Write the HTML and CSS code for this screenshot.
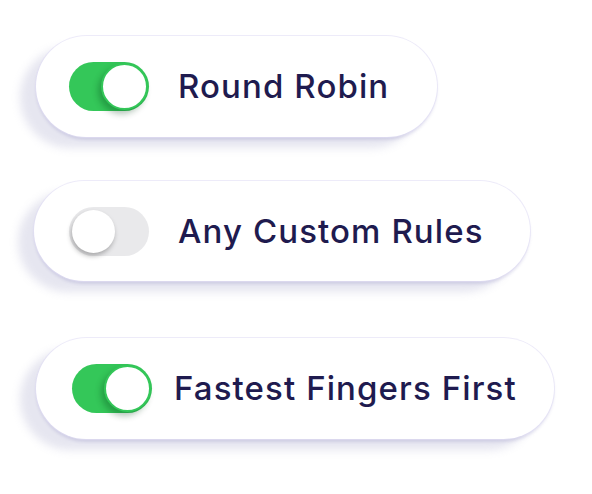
FILE: index.html
```html
<!DOCTYPE html>
<html>
<head>
<meta charset="utf-8">
<link rel="stylesheet" href="styles.css">
</head>
<body>
<div class="list">
  <div class="pill pill-1">
    <span class="toggle on"><span class="knob"></span></span>
    <span class="label">Round Robin</span>
  </div>
  <div class="pill pill-2">
    <span class="toggle"><span class="knob"></span></span>
    <span class="label">Any Custom Rules</span>
  </div>
  <div class="pill pill-3">
    <span class="toggle on"><span class="knob"></span></span>
    <span class="label">Fastest Fingers First</span>
  </div>
</div>
</body>
</html>
```
FILE: styles.css
```css
html, body {
  margin: 0;
  padding: 0;
  background: #ffffff;
}
body {
  width: 592px;
  height: 494px;
  overflow: hidden;
  font-family: Inter, "Noto Sans", sans-serif;
}
.list {
  display: flex;
  flex-direction: column;
  align-items: flex-start;
  padding: 36px 0 0 36px;
}
.pill {
  display: flex;
  align-items: center;
  height: 101px;
  box-sizing: border-box;
  background: #ffffff;
  border-radius: 51px;
  padding: 0 48px 0 33px;
  gap: 29px;
  box-shadow:
    0 0 0 1px rgba(225, 222, 245, 0.6),
    0 3px 3px rgba(110, 105, 180, 0.18),
    -16px 11px 8px rgba(200, 200, 222, 0.45);
}
.pill-2 {
  margin-top: 44px;
  margin-left: -2px;
  height: 100px;
  padding-left: 35px;
  padding-right: 46px;
}
.pill-3 {
  margin-top: 57px;
  padding-left: 36px;
  padding-right: 37px;
  gap: 22px;
}
.label {
  font-size: 33px;
  font-weight: 500;
  color: #1f1b4f;
  letter-spacing: 1.1px;
  line-height: 1;
}
.toggle {
  position: relative;
  width: 80px;
  height: 49px;
  border-radius: 25px;
  background: #e9e9eb;
  flex: none;
}
.toggle.on {
  background: #34c759;
}
.knob {
  position: absolute;
  top: 3px;
  left: 3px;
  width: 43px;
  height: 43px;
  border-radius: 50%;
  background: #ffffff;
  box-shadow: -1px 3px 5px rgba(0, 0, 0, 0.28);
}
.toggle.on .knob {
  top: 1px;
  left: auto;
  right: 1px;
  width: 43px;
  height: 43px;
  border: 2px solid #34c759;
  box-shadow: -3px 4px 6px rgba(0, 60, 20, 0.3);
}
```
